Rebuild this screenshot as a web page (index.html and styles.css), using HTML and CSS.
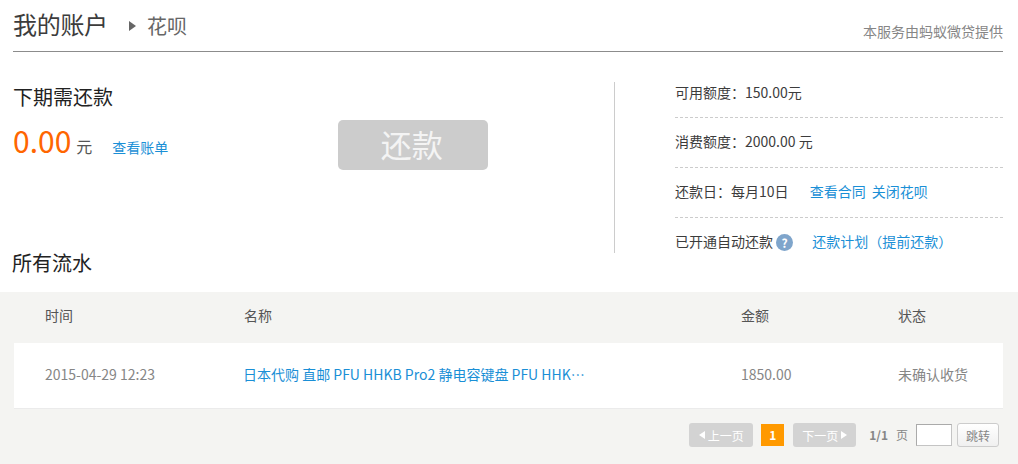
FILE: index.html
```html
<!DOCTYPE html>
<html lang="zh">
<head>
    <meta charset="UTF-8">
    <title>我的账户 - 花呗</title>
    <link rel="stylesheet" href="styles.css">
</head>
<body>
    <div class="top">
        <div class="header">
            <span class="header-title">我的账户</span>
            <span class="header-arrow"></span>
            <span class="header-sub">花呗</span>
            <span class="header-note">本服务由蚂蚁微贷提供</span>
        </div>

        <div class="summary">
            <div class="summary-left">
                <div class="due-title">下期需还款</div>
                <div class="due-row">
                    <span class="due-amount">0.00</span>
                    <span class="due-unit">元</span>
                    <a href="#" class="link due-link">查看账单</a>
                    <button class="repay-btn">还款</button>
                </div>
                <div class="list-title">所有流水</div>
            </div>
            <div class="summary-right">
                <div class="info-row">可用额度：150.00元</div>
                <div class="info-row">消费额度：2000.00 元</div>
                <div class="info-row">
                    还款日：每月10日
                    <a href="#" class="link info-gap">查看合同</a>
                    <a href="#" class="link info-next">关闭花呗</a>
                </div>
                <div class="info-row">
                    已开通自动还款
                    <span class="help">?</span>
                    <a href="#" class="link info-plan">还款计划（提前还款）</a>
                </div>
            </div>
        </div>
    </div>

    <div class="records">
        <div class="records-head">
            <span class="col-time">时间</span>
            <span class="col-name">名称</span>
            <span class="col-amount">金额</span>
            <span class="col-state">状态</span>
        </div>
        <div class="records-row">
            <span class="col-time">2015-04-29 12:23</span>
            <a href="#" class="link col-name">日本代购 直邮 PFU HHKB Pro2 静电容键盘 PFU HHK…</a>
            <span class="col-amount">1850.00</span>
            <span class="col-state">未确认收货</span>
        </div>
        <div class="pager">
            <span class="pager-btn"><i class="tri tri-left"></i>上一页</span>
            <span class="pager-num">1</span>
            <span class="pager-btn"><span>下一页</span><i class="tri tri-right"></i></span>
            <b class="pager-total">1/1</b>
            <span class="pager-unit">页</span>
            <input class="pager-input" type="text">
            <button class="pager-go">跳转</button>
        </div>
    </div>
</body>
</html>
```

FILE: styles.css
```css
:root {
    --link-color: #1a8fd6;
    --text-color: #3c3c3c;
    --gray-color: #868686;
}
* {
    box-sizing: border-box;
}
body {
    font-family: "Noto Sans CJK SC", "Noto Sans", sans-serif;
    font-size: 14px;
    color: var(--text-color);
    margin: 0;
    background-color: #fff;
}
.link {
    color: var(--link-color);
    text-decoration: none;
}
.top {
    padding: 0 15px 0 13px;
}
.header {
    display: flex;
    align-items: center;
    height: 52px;
    border-bottom: 1px solid #8c8c8c;
}
.header-title {
    font-size: 24px;
    line-height: 50px;
    width: 93px;
    margin-top: -4px;
    white-space: nowrap;
    letter-spacing: -0.3px;
}
.header-arrow {
    width: 0;
    height: 0;
    margin: 0 11px 0 23px;
    border-left: 7px solid #666;
    border-top: 5px solid transparent;
    border-bottom: 5px solid transparent;
}
.header-sub {
    font-size: 20px;
    color: #666;
}
.header-note {
    margin-left: auto;
    margin-top: 10px;
    color: var(--gray-color);
}
.summary {
    display: flex;
    height: 240px;
    padding-top: 30px;
}
.summary-left {
    width: 601px;
    display: flex;
    flex-direction: column;
}
.due-title {
    font-size: 20px;
    line-height: 30px;
    color: #222;
}
.due-row {
    display: flex;
    align-items: baseline;
    height: 50px;
    margin-top: 8px;
}
.due-amount {
    font-size: 30px;
    line-height: 40px;
    color: #f60;
}
.due-unit {
    font-size: 16px;
    margin-left: 5px;
    color: #555;
}
.due-link {
    margin-left: 20px;
}
.repay-btn {
    align-self: flex-start;
    width: 150px;
    height: 50px;
    margin-left: 170px;
    border: none;
    border-radius: 5px;
    background-color: #ccc;
    color: #f4f4f4;
    font-family: inherit;
    font-size: 31px;
    line-height: 46px;
    padding: 0 3px 2px 0;
}
.list-title {
    margin-top: auto;
    margin-left: -1px;
    font-size: 20px;
    line-height: 30px;
    padding-bottom: 14px;
    color: #222;
}
.summary-right {
    flex: 1;
    align-self: flex-start;
    height: 171px;
    padding-left: 60px;
    border-left: 1px solid #ccc;
}
.info-row {
    line-height: 20px;
    padding: 13px 0 16px;
    border-bottom: 1px dashed #ccc;
}
.info-row:first-child {
    padding-top: 0;
    padding-bottom: 15px;
}
.info-row:last-child {
    border-bottom: none;
}
.info-gap {
    margin-left: 18px;
}
.info-next {
    margin-left: 3px;
}
.info-plan {
    margin-left: 16px;
}
.help {
    display: inline-block;
    width: 17px;
    height: 17px;
    border-radius: 50%;
    background-color: #7fa5cb;
    color: #fff;
    font-size: 12px;
    font-weight: bold;
    line-height: 17px;
    text-align: center;
    vertical-align: -1px;
}
.records {
    height: 172px;
    background-color: #f4f4f2;
    padding: 0 15px 0 14px;
}
.records-head,
.records-row {
    display: flex;
    align-items: center;
}
.records-head {
    height: 51px;
    padding-bottom: 5px;
    color: #555;
}
.records-row {
    height: 66px;
    padding-bottom: 4px;
    background-color: #fff;
    border-bottom: 1px solid #ebebeb;
    color: var(--gray-color);
}
.records-row .link {
    color: var(--link-color);
}
.col-time {
    width: 199px;
    margin-left: 31px;
}
.col-name {
    width: 497px;
}
.records-row .col-name {
    margin-left: -1px;
    margin-right: 1px;
}
.col-amount {
    width: 157px;
}
.pager {
    display: flex;
    justify-content: flex-end;
    align-items: center;
    height: 24px;
    margin-top: 14px;
    padding-right: 4px;
    font-size: 12px;
    color: var(--gray-color);
}
.pager-btn {
    display: flex;
    align-items: center;
    justify-content: center;
    gap: 3px;
    width: 64px;
    height: 24px;
    border-radius: 3px;
    background-color: #d3d3d3;
    color: #fff;
}
.pager-num + .pager-btn {
    width: 63px;
}
.tri {
    width: 0;
    height: 0;
    border-top: 4px solid transparent;
    border-bottom: 4px solid transparent;
}
.tri-left {
    border-right: 6px solid #fff;
}
.tri-right {
    border-left: 6px solid #fff;
}
.pager-num {
    width: 23px;
    height: 22px;
    margin: 0 9px 0 8px;
    background-color: #f90;
    color: #fff;
    font-weight: bold;
    line-height: 22px;
    text-align: center;
}
.pager-total {
    margin-left: 13px;
    margin-top: -1px;
}
.pager-unit {
    margin-left: 8px;
    margin-top: -1px;
}
.pager-input {
    width: 36px;
    height: 22px;
    margin: 0 5px 0 8px;
    padding: 0;
    background-color: #fff;
    border: 1px solid #c4c4c4;
    border-top-color: #aaa;
    border-left-color: #aaa;
}
.pager-go {
    width: 42px;
    height: 24px;
    padding: 0;
    border: 1px solid #ccc;
    border-radius: 3px;
    background: linear-gradient(#fff, #f0f0f0);
    color: var(--gray-color);
    font-family: inherit;
    font-size: 12px;
}
```
